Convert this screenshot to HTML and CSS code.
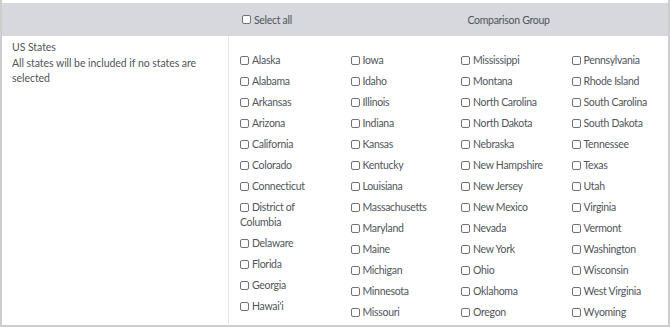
FILE: index.html
```html
<!DOCTYPE html>
<html lang="en">
  <head>
    <meta charset="UTF-8" />
    <meta name="viewport" content="width=device-width, initial-scale=1.0" />
    <title>Comparison Group</title>
    <link rel="stylesheet" href="styles.css">
  </head>
  <body>
    <div class="panel">
      <div class="head">
        <div class="head-blank"></div>
        <label class="head-select"><input type="checkbox" />Select all</label>
        <div class="head-title">Comparison Group</div>
      </div>

      <div class="body">
        <div class="desc">
          <p>US States</p>
          <p>All states will be included if no states are selected</p>
        </div>

        <div class="states">
          <div class="col">
            <label class="state"><input type="checkbox" />Alaska</label>
            <label class="state"><input type="checkbox" />Alabama</label>
            <label class="state"><input type="checkbox" />Arkansas</label>
            <label class="state"><input type="checkbox" />Arizona</label>
            <label class="state"><input type="checkbox" />California</label>
            <label class="state"><input type="checkbox" />Colorado</label>
            <label class="state"><input type="checkbox" />Connecticut</label>
            <label class="state"><input type="checkbox" />District of Columbia</label>
            <label class="state"><input type="checkbox" />Delaware</label>
            <label class="state"><input type="checkbox" />Florida</label>
            <label class="state"><input type="checkbox" />Georgia</label>
            <label class="state"><input type="checkbox" />Hawai'i</label>
          </div>
          <div class="col">
            <label class="state"><input type="checkbox" />Iowa</label>
            <label class="state"><input type="checkbox" />Idaho</label>
            <label class="state"><input type="checkbox" />Illinois</label>
            <label class="state"><input type="checkbox" />Indiana</label>
            <label class="state"><input type="checkbox" />Kansas</label>
            <label class="state"><input type="checkbox" />Kentucky</label>
            <label class="state"><input type="checkbox" />Louisiana</label>
            <label class="state"><input type="checkbox" />Massachusetts</label>
            <label class="state"><input type="checkbox" />Maryland</label>
            <label class="state"><input type="checkbox" />Maine</label>
            <label class="state"><input type="checkbox" />Michigan</label>
            <label class="state"><input type="checkbox" />Minnesota</label>
            <label class="state"><input type="checkbox" />Missouri</label>
          </div>
          <div class="col">
            <label class="state"><input type="checkbox" />Mississippi</label>
            <label class="state"><input type="checkbox" />Montana</label>
            <label class="state"><input type="checkbox" />North Carolina</label>
            <label class="state"><input type="checkbox" />North Dakota</label>
            <label class="state"><input type="checkbox" />Nebraska</label>
            <label class="state"><input type="checkbox" />New Hampshire</label>
            <label class="state"><input type="checkbox" />New Jersey</label>
            <label class="state"><input type="checkbox" />New Mexico</label>
            <label class="state"><input type="checkbox" />Nevada</label>
            <label class="state"><input type="checkbox" />New York</label>
            <label class="state"><input type="checkbox" />Ohio</label>
            <label class="state"><input type="checkbox" />Oklahoma</label>
            <label class="state"><input type="checkbox" />Oregon</label>
          </div>
          <div class="col">
            <label class="state"><input type="checkbox" />Pennsylvania</label>
            <label class="state"><input type="checkbox" />Rhode Island</label>
            <label class="state"><input type="checkbox" />South Carolina</label>
            <label class="state"><input type="checkbox" />South Dakota</label>
            <label class="state"><input type="checkbox" />Tennessee</label>
            <label class="state"><input type="checkbox" />Texas</label>
            <label class="state"><input type="checkbox" />Utah</label>
            <label class="state"><input type="checkbox" />Virginia</label>
            <label class="state"><input type="checkbox" />Vermont</label>
            <label class="state"><input type="checkbox" />Washington</label>
            <label class="state"><input type="checkbox" />Wisconsin</label>
            <label class="state"><input type="checkbox" />West Virginia</label>
            <label class="state"><input type="checkbox" />Wyoming</label>
          </div>
        </div>
      </div>
    </div>
  </body>
</html>
```

FILE: styles.css
```css
* {
  padding: 0;
  margin: 0;
  box-sizing: border-box;
}

body {
  font-family: Lato, "Open Sans", sans-serif;
  font-size: 10.5px;
  letter-spacing: -0.3px;
  color: #50555b;
  background: #fff;
}

.panel {
  width: 670px;
  height: 327px;
  padding-top: 3px;
  border-left: 2px solid #cdcdcd;
  border-right: 2px solid #cdcdcd;
  border-bottom: 2px solid #cdcdcd;
}

.head {
  display: grid;
  grid-template-columns: 226px 121px 1fr;
  align-items: center;
  height: 33px;
  background: #d6d8dd;
}

.head-select {
  display: flex;
  align-items: center;
  padding-left: 14px;
}

.head-title {
  text-align: center;
}

input[type="checkbox"] {
  appearance: none;
  width: 9px;
  height: 9px;
  border: 1px solid #6f7378;
  border-radius: 2px;
  background: #fff;
  vertical-align: -1px;
  margin-right: 3px;
}

.body {
  display: grid;
  grid-template-columns: 226px 1fr;
  height: 287px;
}

.desc {
  padding: 4px 12px 0 10px;
  line-height: 15.5px;
  letter-spacing: -0.05px;
}

.states {
  display: grid;
  grid-template-columns: repeat(4, 110.5px);
  padding: 17px 0 0 11px;
  border-left: 1px solid #e6e6e6;
}

.col {
  display: flex;
  flex-direction: column;
  padding-right: 14px;
}

.state {
  display: block;
  line-height: 15px;
  margin-bottom: 6px;
}
```
